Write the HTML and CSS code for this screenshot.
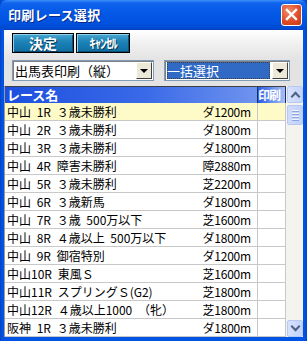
FILE: index.html
```html
<!DOCTYPE html>
<html lang="ja">
  <head>
    <meta charset="UTF-8" />
    <title>印刷レース選択</title>
    <link rel="stylesheet" href="styles.css">
  </head>
  <body>
    <div class="window">
      <div class="titlebar">
        <span class="title">印刷レース選択</span>
        <div class="close">
          <svg width="13" height="13" viewBox="0 0 13 13">
            <path d="M2 2 L11 11 M11 2 L2 11" stroke="#fff" stroke-width="2.4" stroke-linecap="square" />
          </svg>
        </div>
      </div>

      <div class="content">
        <div class="toolbar">
          <button class="btn btn_ok">決定</button>
          <button class="btn btn_cancel">ｷｬﾝｾﾙ</button>
        </div>

        <div class="selects">
          <div class="combo combo_left">
            <span class="combo_text">出馬表印刷（縦）</span>
            <span class="combo_arrow"></span>
          </div>
          <div class="combo combo_right">
            <span class="combo_text selected">一括選択</span>
            <span class="combo_arrow"></span>
          </div>
        </div>

        <div class="list">
          <div class="grid">
            <div class="head">
              <div class="h_name">レース名</div>
              <div class="h_print">印刷</div>
            </div>
            <div id="rows"></div>
          </div>
          <div class="scrollbar">
            <div class="sb_btn sb_up"></div>
            <div class="sb_thumb"><span></span><span></span><span></span><span></span></div>
            <div class="sb_track"></div>
            <div class="sb_btn sb_down"></div>
          </div>
        </div>
      </div>
    </div>

    <script>
      const races = [
        ["中山 1R ３歳未勝利", "ダ1200m"],
        ["中山 2R ３歳未勝利", "ダ1800m"],
        ["中山 3R ３歳未勝利", "ダ1800m"],
        ["中山 4R 障害未勝利", "障2880m"],
        ["中山 5R ３歳未勝利", "芝2200m"],
        ["中山 6R ３歳新馬", "ダ1800m"],
        ["中山 7R ３歳 500万以下", "芝1600m"],
        ["中山 8R ４歳以上 500万以下", "ダ1800m"],
        ["中山 9R 御宿特別", "ダ1200m"],
        ["中山10R 東風Ｓ", "芝1600m"],
        ["中山11R スプリングＳ(G2)", "芝1800m"],
        ["中山12R ４歳以上1000 （牝）", "芝1800m"],
        ["阪神 1R ３歳未勝利", "ダ1800m"]
      ];

      const rows = document.getElementById("rows");
      races.forEach((r, i) => {
        const row = document.createElement("div");
        row.className = i === 0 ? "row current" : "row";
        row.innerHTML =
          '<div class="c_name"><span class="name">' + r[0] +
          '</span><span class="dist">' + r[1] + '</span></div><div class="c_print"></div>';
        rows.appendChild(row);
      });
    </script>
  </body>
</html>
```

FILE: styles.css
```css
body {
  margin: 0;
  padding: 0;
  font-family: "Noto Sans CJK JP", "Liberation Sans", sans-serif;
  font-size: 12px;
  background: #fff;
}
.window {
  width: 307px;
  height: 341px;
  box-sizing: border-box;
  padding: 0 4px 4px 4px;
  background: linear-gradient(to right, #0a3fbf, #0054e3 2px, #0054e3 305px, #0a3fbf);
  display: flex;
  flex-direction: column;
  overflow: hidden;
}
.titlebar {
  height: 29px;
  margin: 0 -4px;
  padding: 0 5px 0 8px;
  display: flex;
  align-items: center;
  justify-content: space-between;
  background: linear-gradient(#3d8ef8 0, #0f63ec 3px, #0459e6 12px, #0053e1 22px, #0049cf 29px);
  border-radius: 7px 7px 0 0;
}
.title {
  color: white;
  font-weight: bold;
  font-size: 13px;
  letter-spacing: 0.3px;
  text-shadow: 1px 1px 0 #0a2a8a;
}
.close {
  width: 19px;
  height: 20px;
  border: 1px solid #fff;
  border-radius: 3px;
  background: radial-gradient(circle at 35% 30%, #f08a6a, #dd4a24 60%, #c63a16);
  display: flex;
  align-items: center;
  justify-content: center;
}
.content {
  flex: 1;
  background: linear-gradient(#ffffff, #f0f0f0 14px, #e3e3e3 30px, #e6e6e6);
  display: flex;
  flex-direction: column;
  border-top: 1px solid #0a3fbf;
}
.toolbar {
  display: flex;
  gap: 2px;
  padding: 3px 0 0 8px;
}
.btn {
  height: 20px;
  border: 1px solid #000;
  background: linear-gradient(#4aa8d4, #1f84b8 40%, #0e6ea2);
  box-shadow: inset 1px 1px 0 #8fd0ee, inset -1px -1px 0 #0a4e78;
  color: white;
  font-family: "Noto Sans CJK JP", sans-serif;
  font-weight: bold;
  font-size: 14px;
  line-height: 16px;
  padding: 0;
  text-shadow: 1px 1px 0 #063a5a;
}
.btn_ok {
  width: 62px;
}
.btn_cancel {
  width: 54px;
  font-size: 13px;
  letter-spacing: -1px;
}
.selects {
  display: flex;
  gap: 10px;
  padding: 7px 0 0 8px;
}
.combo {
  height: 21px;
  box-sizing: border-box;
  background: white;
  border: 1px solid #7f9db9;
  box-shadow: inset 1px 1px 0 #808080;
  display: flex;
  align-items: center;
  padding: 1px 1px 1px 2px;
}
.combo_left {
  width: 142px;
}
.combo_right {
  width: 126px;
}
.combo_text {
  flex: 1;
  font-size: 13px;
  line-height: 17px;
  height: 17px;
  color: #000;
  white-space: nowrap;
}
.combo_text.selected {
  background: #316ac5;
  color: white;
  outline: 1px dotted #404040;
  outline-offset: -1px;
  margin-right: 2px;
}
.combo_arrow {
  width: 16px;
  height: 17px;
  box-sizing: border-box;
  background: #ece9d8;
  border: 1px solid;
  border-color: #fff #404040 #404040 #fff;
  display: flex;
  align-items: center;
  justify-content: center;
}
.combo_arrow::after {
  content: "";
  border-left: 4px solid transparent;
  border-right: 4px solid transparent;
  border-top: 4px solid #000;
}
.list {
  margin-top: 5px;
  flex: 1;
  display: flex;
  background: #f4f3ee;
  overflow: hidden;
}
.grid {
  width: 282px;
  background: white;
  border-left: 1px solid #9a9a9a;
  box-sizing: border-box;
}
.head {
  height: 17px;
  display: flex;
  border-top: 1px solid #404040;
  box-sizing: border-box;
  background: linear-gradient(to right, #1c4fdf, #3a6ae8 50%, #7d9ef0);
  color: white;
  font-weight: bold;
  font-size: 13px;
  line-height: 13px;
}
.h_name {
  width: 253px;
  padding: 1px 0 0 2px;
  box-sizing: border-box;
  border-right: 1px solid #1a2a70;
}
.h_print {
  width: 27px;
  padding-top: 1px;
  font-size: 12px;
  letter-spacing: -1px;
  overflow: hidden;
  white-space: nowrap;
  background: linear-gradient(to right, #2a5de6, #a8c0f4);
  border-right: 1px solid #1a2a70;
}
.row {
  height: 18px;
  display: flex;
  border-bottom: 1px solid #c8c8c8;
  box-sizing: border-box;
}
.row.current {
  background: #fffbc8;
}
.c_name {
  width: 253px;
  box-sizing: border-box;
  padding: 0 6px 0 2px;
  display: flex;
  justify-content: space-between;
  align-items: center;
  border-right: 1px solid #c8c8c8;
  white-space: pre;
  line-height: 17px;
  font-size: 12px;
}
.name {
  word-spacing: 3px;
}
.dist {
  letter-spacing: -0.2px;
}
.c_print {
  width: 27px;
  border-right: 1px solid #c8c8c8;
}
.scrollbar {
  width: 17px;
  display: flex;
  flex-direction: column;
  background: #f4f3ee;
}
.sb_btn {
  height: 17px;
  margin: 0 0 0 1px;
  border: 1px solid #b8c8f2;
  border-radius: 2px;
  background: linear-gradient(to right, #d7e2fc, #c3d3fb);
  box-sizing: border-box;
  display: flex;
  align-items: center;
  justify-content: center;
}
.sb_up::after,
.sb_down::after {
  content: "";
  width: 5px;
  height: 5px;
  border: solid #4d6185;
  border-width: 2px 2px 0 0;
}
.sb_up::after {
  transform: translateY(2px) rotate(-45deg);
}
.sb_down::after {
  transform: translateY(-2px) rotate(135deg);
}
.sb_thumb {
  height: 20px;
  margin: 2px 0 0 1px;
  border: 1px solid #b8c8f2;
  border-radius: 2px;
  background: linear-gradient(to right, #cfdcfb, #bfd0fa);
  box-sizing: border-box;
  display: flex;
  flex-direction: column;
  align-items: center;
  justify-content: center;
  gap: 1px;
}
.sb_thumb span {
  width: 7px;
  height: 1px;
  background: #eef3fe;
  border-bottom: 1px solid #8ca4e0;
}
.sb_track {
  flex: 1;
}
```
